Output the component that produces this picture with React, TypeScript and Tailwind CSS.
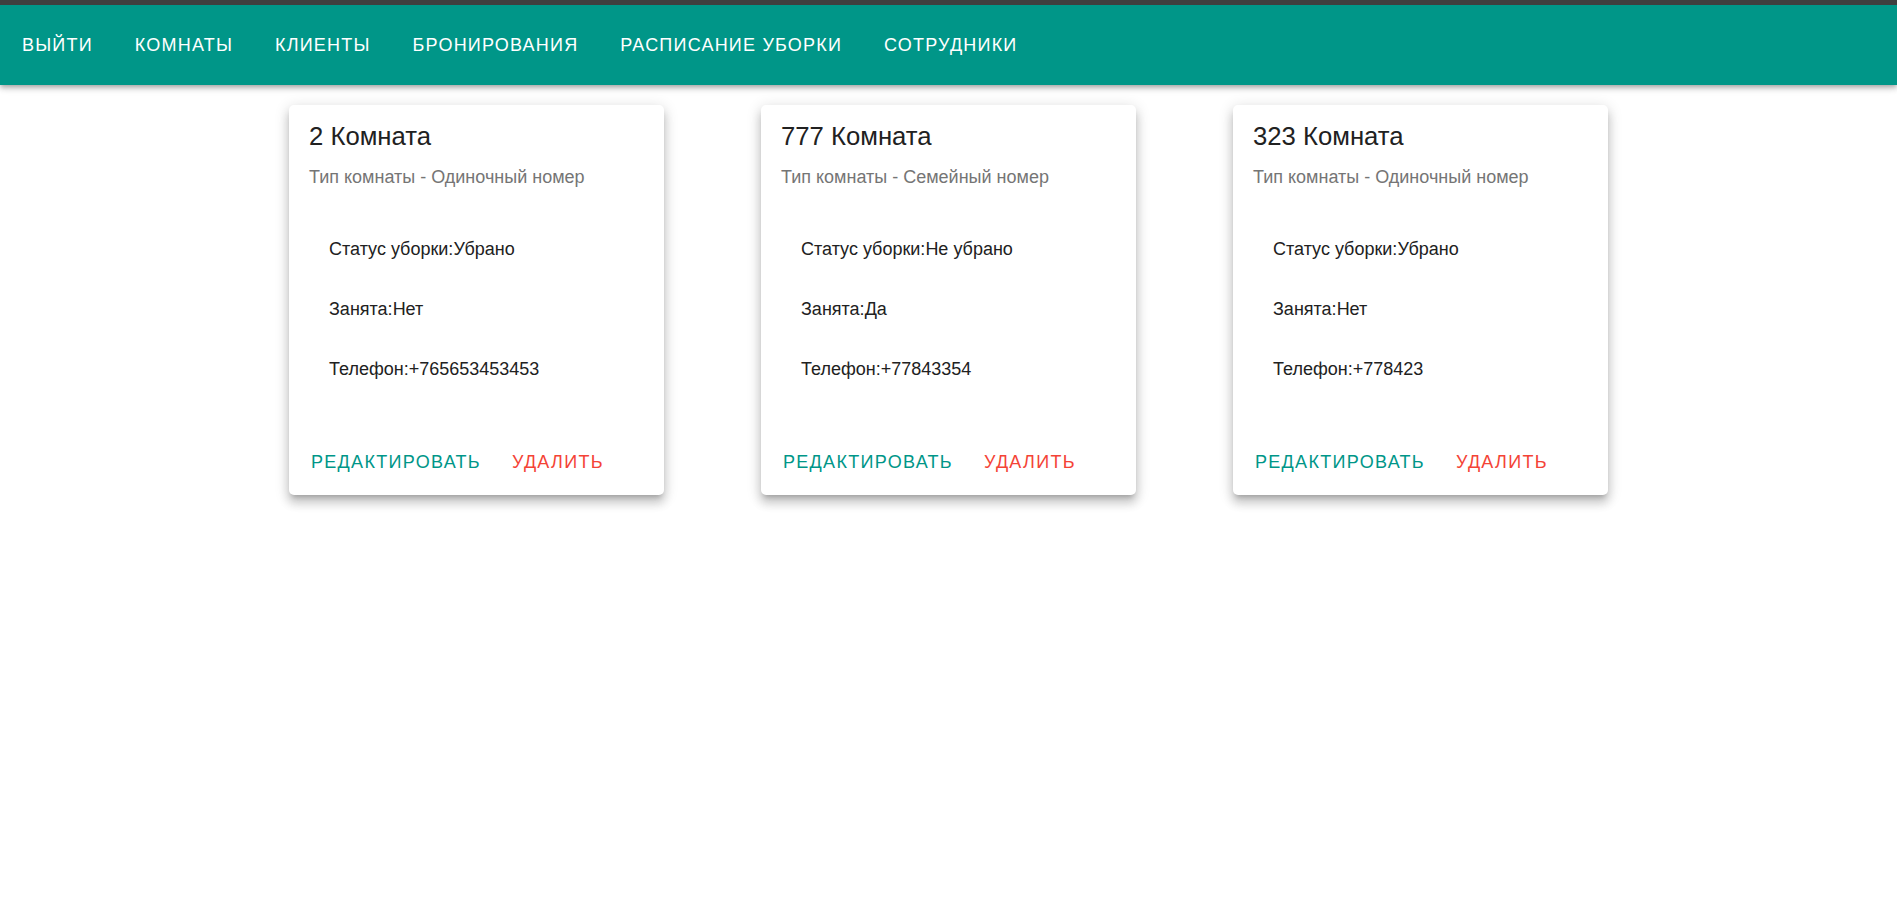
const navItems = ["Выйти", "Комнаты", "Клиенты", "Бронирования", "Расписание уборки", "Сотрудники"]

const rooms = [
    { number: "2", type: "Одиночный номер", status: "Убрано", busy: "Нет", phone: "+765653453453" },
    { number: "777", type: "Семейный номер", status: "Не убрано", busy: "Да", phone: "+77843354" },
    { number: "323", type: "Одиночный номер", status: "Убрано", busy: "Нет", phone: "+778423" },
]

function Header() {
    return (
        <header className="border-t-[5px] border-[#3f3f3f] bg-[#009688] shadow-[0_2px_4px_-1px_rgba(0,0,0,0.2),0_4px_5px_0_rgba(0,0,0,0.14),0_1px_10px_0_rgba(0,0,0,0.12)]">
            <nav className="flex h-[80px] items-center gap-[42px] px-[22px]">
                {navItems.map((item) => (
                    <a key={item} href="#" className="text-[18px] uppercase tracking-[1.2px] text-white leading-6">
                        {item}
                    </a>
                ))}
            </nav>
        </header>
    )
}

function RoomCard({ room }: { room: (typeof rooms)[number] }) {
    return (
        <div className="flex h-[390px] w-[375px] flex-col rounded-[5px] bg-white shadow-[0_5px_5px_-3px_rgba(0,0,0,0.2),0_8px_10px_1px_rgba(0,0,0,0.14),0_3px_14px_2px_rgba(0,0,0,0.12)]">
            <div className="px-[20px] pt-[15px]">
                <h2 className="text-[25.7px] leading-[32px] text-[#212121]">{room.number} Комната</h2>
                <p className="mt-[13px] text-[18px] leading-6 text-[#757575]">Тип комнаты - {room.type}</p>
            </div>
            <ul className="mt-[30px] px-[40px] text-[18px] text-[#212121]">
                <li className="flex h-[60px] items-center">Статус уборки:{room.status}</li>
                <li className="flex h-[60px] items-center">Занята:{room.busy}</li>
                <li className="flex h-[60px] items-center">Телефон:{room.phone}</li>
            </ul>
            <div className="mt-auto flex items-center gap-[31px] pb-[11px] pl-[22px]">
                <button className="h-[44px] text-[18px] uppercase tracking-[1.3px] text-[#009688]">Редактировать</button>
                <button className="h-[44px] text-[18px] uppercase tracking-[1.3px] text-[#f44336]">Удалить</button>
            </div>
        </div>
    )
}

export default function App() {
    return (
        <div className="min-h-[913px] bg-white font-['Liberation_Sans',Arial,sans-serif]">
            <Header />
            <main className="flex justify-center gap-[97px] pt-[20px]">
                {rooms.map((room) => (
                    <RoomCard key={room.number} room={room} />
                ))}
            </main>
        </div>
    )
}
